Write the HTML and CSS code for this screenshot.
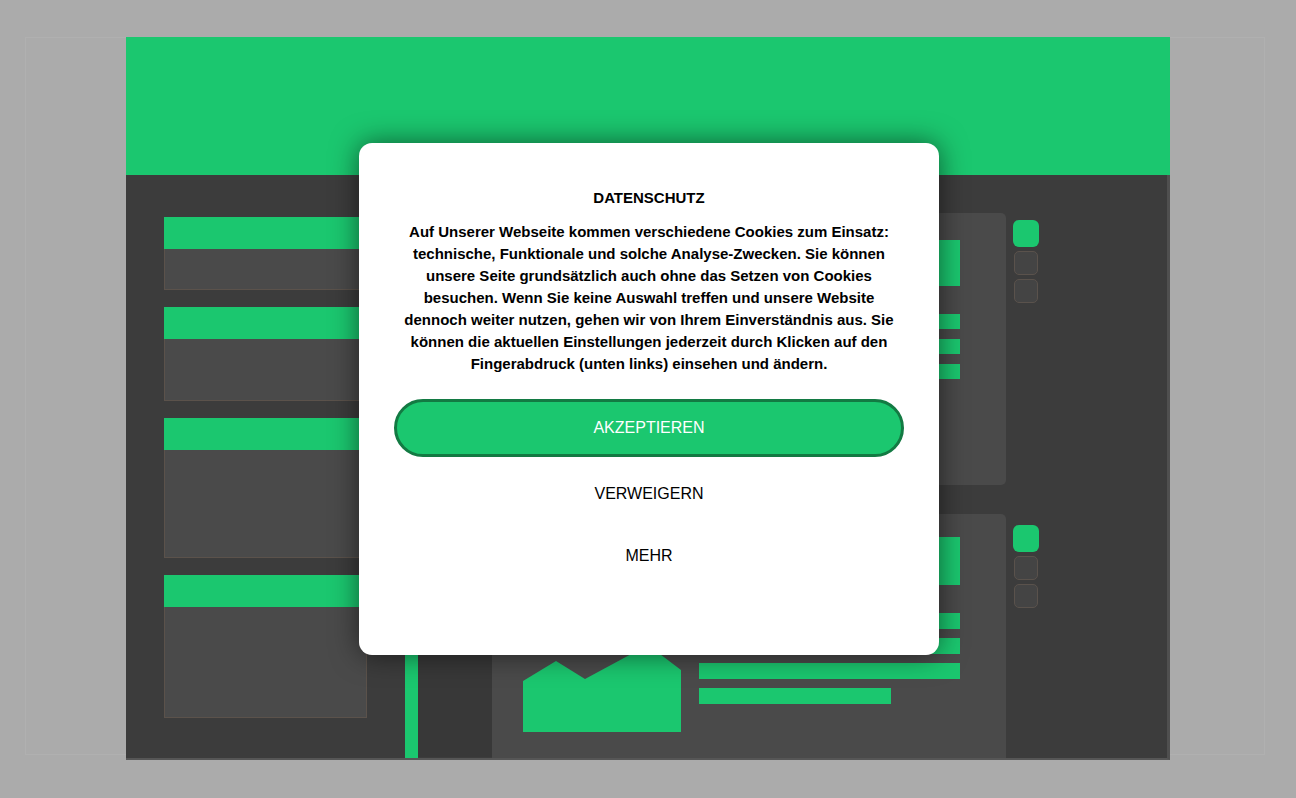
FILE: index.html
```html
<!DOCTYPE html>
<html lang="de">
<head>
<meta charset="utf-8">
<title>Datenschutz</title>
<link rel="stylesheet" href="styles.css">
</head>
<body>
<div class="stage">
  <div class="frame">
    <div class="hero"></div>
    <div class="main">
      <div class="cards">
        <div class="card"><div class="card-head"></div><div class="card-body b1"></div></div>
        <div class="card"><div class="card-head"></div><div class="card-body b2"></div></div>
        <div class="card"><div class="card-head"></div><div class="card-body b3"></div></div>
        <div class="card"><div class="card-head"></div><div class="card-body b4"></div></div>
      </div>
      <div class="vbar"></div>
      <div class="darkcol"></div>
      <div class="panels">
        <div class="panel panel-top">
          <div class="pcol-left"></div>
          <div class="pcol-right">
            <div class="block block-top"></div>
            <div class="bars bars-top">
              <div class="bar"></div>
              <div class="bar"></div>
              <div class="bar"></div>
            </div>
          </div>
        </div>
        <div class="panel panel-bottom">
          <div class="pcol-left">
            <svg class="chart" width="158" height="87" viewBox="0 0 158 87">
              <polygon points="0,36 33,16 62,34 125,0 158,25 158,87 0,87" fill="#1bc76f"/>
            </svg>
          </div>
          <div class="pcol-right">
            <div class="block block-bottom"></div>
            <div class="bars bars-bottom">
              <div class="bar"></div>
              <div class="bar"></div>
              <div class="bar"></div>
              <div class="bar short"></div>
            </div>
          </div>
        </div>
      </div>
      <div class="squares">
        <div class="sq-group">
          <div class="sq on"></div>
          <div class="sq"></div>
          <div class="sq"></div>
        </div>
        <div class="sq-group second">
          <div class="sq on"></div>
          <div class="sq"></div>
          <div class="sq"></div>
        </div>
      </div>
    </div>
  </div>
</div>

<div class="modal" role="dialog" aria-labelledby="m-title">
  <h2 class="m-title" id="m-title">DATENSCHUTZ</h2>
  <p class="m-text">Auf Unserer Webseite kommen verschiedene Cookies zum Einsatz:<br>technische, Funktionale und solche Analyse-Zwecken. Sie können<br>unsere Seite grundsätzlich auch ohne das Setzen von Cookies<br>besuchen. Wenn Sie keine Auswahl treffen und unsere Website<br>dennoch weiter nutzen, gehen wir von Ihrem Einverständnis aus. Sie<br>können die aktuellen Einstellungen jederzeit durch Klicken auf den<br>Fingerabdruck (unten links) einsehen und ändern.</p>
  <button class="btn-accept" type="button">AKZEPTIEREN</button>
  <button class="btn-link first" type="button">VERWEIGERN</button>
  <button class="btn-link" type="button">MEHR</button>
</div>
</body>
</html>
```

FILE: styles.css
```css
* { box-sizing: border-box; }

html, body {
  margin: 0;
  padding: 0;
}

body {
  width: 1296px;
  height: 798px;
  overflow: hidden;
  background: #ababab;
  font-family: "Liberation Sans", Arial, sans-serif;
  position: relative;
}

.stage {
  margin: 37px 0 0 25px;
  width: 1240px;
  height: 718px;
  border: 1px solid #b0b0b0;
  padding-left: 100px;
}

.frame {
  width: 1044px;
  margin-top: -1px;
}

.hero {
  height: 138px;
  background: #1bc76f;
}

.main {
  height: 585px;
  background: #3c3c3c;
  border-right: 3px solid #4f4f4f;
  border-bottom: 2px solid #565656;
  display: flex;
  align-items: flex-start;
}

/* left cards */
.cards {
  padding: 42px 0 0 38px;
  display: flex;
  flex-direction: column;
  gap: 17px;
}

.card {
  width: 203px;
  background: #4a4a4a;
  border-left: 1px solid #5b524b;
  border-right: 1px solid #5b524b;
  border-bottom: 1px solid #5b524b;
}

.card-head {
  height: 32px;
  background: #1bc76f;
  margin: 0 -1px;
}

.b1 { height: 40px; }
.b2 { height: 61px; }
.b3 { height: 107px; }
.b4 { height: 110px; }

.vbar {
  width: 13px;
  margin-left: 38px;
  margin-top: 38px;
  align-self: stretch;
  background: #1bc76f;
}

.darkcol {
  width: 74px;
  align-self: stretch;
  margin-bottom: 1px;
  background: #383838;
}

/* panels */
.panels {
  width: 514px;
  align-self: stretch;
  padding-top: 38px;
  display: flex;
  flex-direction: column;
  gap: 29px;
}

.panel {
  background: #4a4a4a;
  border-radius: 0 5px 5px 0;
  display: grid;
  grid-template-columns: 158px 261px;
  column-gap: 18px;
  padding-left: 31px;
}

.panel-top {
  height: 272px;
  padding-top: 27px;
}

.panel-bottom {
  flex: 1;
  padding-top: 23px;
  border-radius: 0 5px 0 0;
}

.pcol-right {
  display: flex;
  flex-direction: column;
}

.block { background: #1bc76f; }
.block-top { height: 46px; }
.block-bottom { height: 48px; }

.bars {
  display: flex;
  flex-direction: column;
  margin-top: 28px;
}

.bars-top { gap: 10px; }
.bars-top .bar { height: 15px; }

.bars-bottom { gap: 9px; }
.bars-bottom .bar { height: 16px; }

.bar {
  background: #1bc76f;
  width: 261px;
}

.bar.short { width: 192px; }

.chart {
  display: block;
  margin-top: 108px;
}

/* squares */
.squares {
  margin-left: 7px;
  padding-top: 45px;
}

.sq-group {
  display: flex;
  flex-direction: column;
  gap: 4px;
}

.sq-group.second { margin-top: 222px; }

.sq {
  width: 24px;
  height: 24px;
  margin-left: 1px;
  border-radius: 5px;
  background: #444;
  border: 1px solid #5a524c;
}

.sq.on {
  width: 26px;
  height: 27px;
  margin-left: 0;
  background: #1bc76f;
  border: none;
  border-radius: 6px;
}

/* modal */
.modal {
  position: absolute;
  left: 359px;
  top: 143px;
  width: 580px;
  height: 512px;
  background: #fff;
  border-radius: 13px;
  box-shadow: 0 0 28px rgba(0, 0, 0, 0.55);
  padding: 44px 30px 0;
  display: flex;
  flex-direction: column;
  align-items: stretch;
  text-align: center;
  color: #000;
}

.m-title {
  margin: 0;
  font-size: 15px;
  line-height: 22px;
  font-weight: bold;
}

.m-text {
  margin: 12px 0 0;
  font-size: 15px;
  line-height: 22px;
  font-weight: bold;
}

.btn-accept {
  margin: 24px 5px 0;
  height: 58px;
  border-radius: 29px;
  border: 3px solid #137a43;
  background: #1bc76f;
  color: #fff;
  font-family: inherit;
  font-size: 16px;
}

.btn-link {
  background: none;
  border: none;
  padding: 20px 0;
  font-family: inherit;
  font-size: 16px;
  line-height: 22px;
  color: #000;
}

.btn-link.first { margin-top: 6px; }
```
